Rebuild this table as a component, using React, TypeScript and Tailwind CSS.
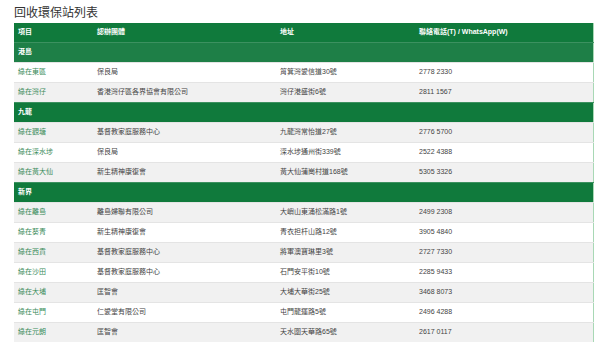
import React from 'react';

type Station = {
  name: string;
  org: string;
  address: string;
  phone: string;
};

type Region = {
  region: string;
  stations: Station[];
};

const data: Region[] = [
  {
    region: '港島',
    stations: [
      { name: '綠在東區', org: '保良局', address: '筲箕灣愛信道30號', phone: '2778 2330' },
      { name: '綠在灣仔', org: '香港灣仔區各界協會有限公司', address: '灣仔港盛街6號', phone: '2811 1567' },
    ],
  },
  {
    region: '九龍',
    stations: [
      { name: '綠在觀塘', org: '基督教家庭服務中心', address: '九龍灣常怡道27號', phone: '2776 5700' },
      { name: '綠在深水埗', org: '保良局', address: '深水埗通州街339號', phone: '2522 4388' },
      { name: '綠在黃大仙', org: '新生精神康復會', address: '黃大仙蒲崗村道168號', phone: '5305 3326' },
    ],
  },
  {
    region: '新界',
    stations: [
      { name: '綠在離島', org: '離島婦聯有限公司', address: '大嶼山東涌松滿路1號', phone: '2499 2308' },
      { name: '綠在葵青', org: '新生精神康復會', address: '青衣担杆山路12號', phone: '3905 4840' },
      { name: '綠在西貢', org: '基督教家庭服務中心', address: '將軍澳寶琳里3號', phone: '2727 7330' },
      { name: '綠在沙田', org: '基督教家庭服務中心', address: '石門安平街10號', phone: '2285 9433' },
      { name: '綠在大埔', org: '匡智會', address: '大埔大華街25號', phone: '3468 8073' },
      { name: '綠在屯門', org: '仁愛堂有限公司', address: '屯門龍運路5號', phone: '2496 4288' },
      { name: '綠在元朗', org: '匡智會', address: '天水圍天華路65號', phone: '2617 0117' },
    ],
  },
];

const font = { fontFamily: '"Liberation Sans", "Noto Sans CJK TC", sans-serif' };

export default function App() {
  let rowIdx = 0;

  return (
    <div className="w-[600px] h-[352px] bg-white pt-[6px] px-[14px] text-[#444]" style={font}>
      <h2 className="text-[12px] leading-[14px] text-[#333] mb-[3px]">回收環保站列表</h2>

      <table className="w-[579px] table-fixed border-collapse text-[7px] border-r border-r-[#a8d8b5]">
        <colgroup>
          <col className="w-[79px]" />
          <col className="w-[183px]" />
          <col className="w-[139px]" />
          <col className="w-[178px]" />
        </colgroup>
        <thead>
          <tr className="h-[19px] bg-[#107a3c] text-white font-bold">
            <th className="text-left pl-[4px] font-bold">項目</th>
            <th className="text-left pl-[4px] font-bold">認辦團體</th>
            <th className="text-left pl-[4px] font-bold">地址</th>
            <th className="text-left pl-[4px] font-bold">聯絡電話(T) / WhatsApp(W)</th>
          </tr>
        </thead>
        <tbody>
          {data.map((r) => {
            rowIdx += 1;
            const secOdd = rowIdx % 2 === 1;
            return (
              <React.Fragment key={r.region}>
                <tr
                  className={`h-[20px] text-white font-bold border-t border-t-[#3c9160] ${
                    secOdd ? 'bg-[#1e7f47]' : 'bg-[#107a3c]'
                  }`}
                >
                  <td colSpan={4} className="pl-[4px]">{r.region}</td>
                </tr>
                {r.stations.map((s) => {
                  rowIdx += 1;
                  const odd = rowIdx % 2 === 1;
                  return (
                    <tr
                      key={s.name}
                      className={`h-[20px] border-t border-t-[#e4e4e4] ${odd ? 'bg-[#f1f1f1]' : 'bg-white'}`}
                    >
                      <td className="pl-[4px] text-[#3a8c5a]">{s.name}</td>
                      <td className="pl-[4px]">{s.org}</td>
                      <td className="pl-[4px]">{s.address}</td>
                      <td className="pl-[4px]">{s.phone}</td>
                    </tr>
                  );
                })}
              </React.Fragment>
            );
          })}
        </tbody>
      </table>
    </div>
  );
}
